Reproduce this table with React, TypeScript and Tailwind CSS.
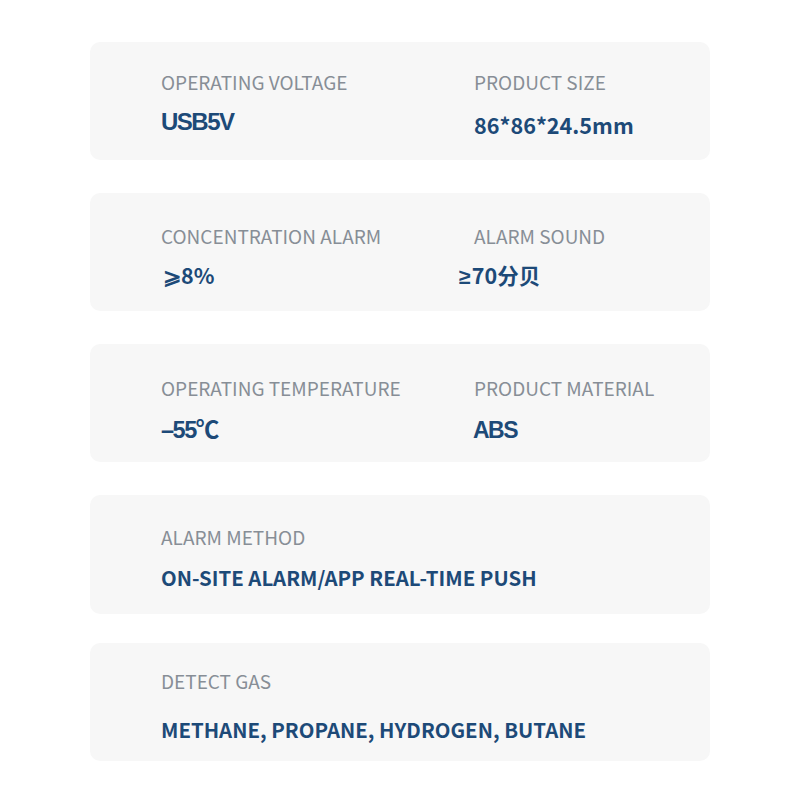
const cjk = "font-['Noto_Sans_CJK_SC','Noto_Sans',sans-serif]"
const arial = "font-['Liberation_Sans','Noto_Sans_CJK_SC',sans-serif]"

type Spec = { label: string; value: React.ReactNode; valueCls?: string; gap?: string }

function Field({ label, value, valueCls, gap }: Spec) {
  return (
    <div className={`flex flex-col ${gap ?? "gap-[18px]"}`}>
      <div className={`${cjk} text-[19px] leading-[20px] text-[#878e96] whitespace-nowrap`}>{label}</div>
      <div
        className={`${valueCls ?? `${cjk} text-[20.4px]`} font-bold leading-[22px] text-[#1d4a78] whitespace-nowrap`}
      >
        {value}
      </div>
    </div>
  )
}

function Card({ left, right, top, cls = "" }: { left: Spec; right?: Spec; top: string; cls?: string }) {
  return (
    <div className={`h-[118px] rounded-[10px] bg-[#f7f7f7] pl-[71px] grid grid-cols-[313px_1fr] items-start ${top} ${cls}`}>
      <Field {...left} />
      {right && <Field {...right} />}
    </div>
  )
}

export default function App() {
  return (
    <div className="w-[800px] h-[800px] bg-white pt-[42px] px-[90px] flex flex-col">
      <Card
        top="pt-[30px]"
        cls="mb-[33px]"
        left={{ label: "OPERATING VOLTAGE", value: "USB5V", gap: "gap-[19px]", valueCls: `${arial} text-[24px] tracking-[-1.5px]` }}
        right={{ label: "PRODUCT SIZE", value: "86*86*24.5mm", gap: "gap-[22px]", valueCls: `${cjk} text-[21.6px]` }}
      />
      <Card
        top="pt-[33px]"
        cls="mb-[33px]"
        left={{ label: "CONCENTRATION ALARM", value: "⩾8%", valueCls: `${cjk} text-[21.5px] pl-[2px]` }}
        right={{
          label: "ALARM SOUND",
          value: (
            <>
              <span className={`${arial} mr-[1px]`}>≥</span>70分贝
            </>
          ),
          valueCls: `${cjk} text-[21.5px] -ml-[15px]`,
        }}
      />
      <Card
        top="pt-[34px]"
        cls="mb-[33px]"
        left={{ label: "OPERATING TEMPERATURE", value: "–55℃", gap: "gap-[21px]", valueCls: `${arial} text-[23.5px] tracking-[-1.5px]` }}
        right={{ label: "PRODUCT MATERIAL", value: "ABS", gap: "gap-[21px]", valueCls: `${arial} text-[23px] tracking-[-1.5px] -ml-[1px]` }}
      />
      <Card
        top="pt-[32px]"
        cls="h-[119px] mb-[29px]"
        left={{ label: "ALARM METHOD", value: "ON-SITE ALARM/APP REAL-TIME PUSH", gap: "gap-[19px]" }}
      />
      <Card
        top="pt-[28px]"
        cls="h-[117px]"
        left={{ label: "DETECT GAS", value: "METHANE, PROPANE, HYDROGEN, BUTANE", gap: "gap-[27px]" }}
      />
    </div>
  )
}
